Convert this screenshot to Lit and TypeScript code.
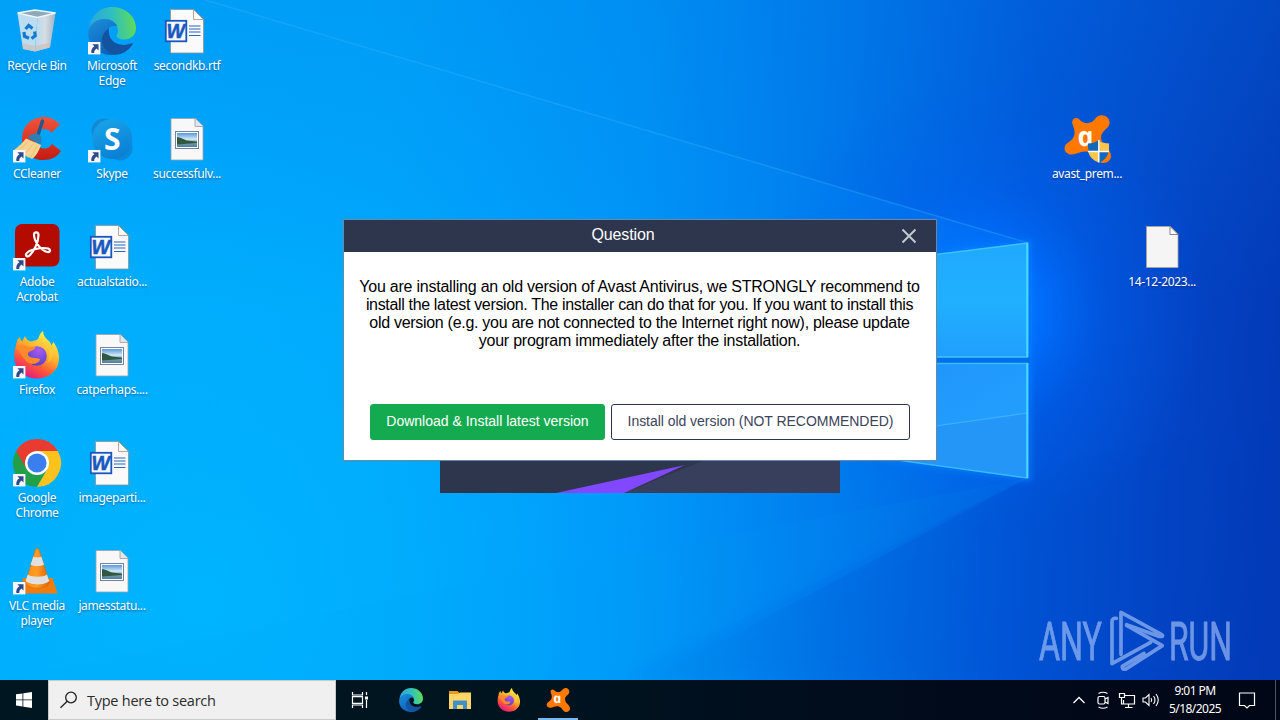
import { LitElement, html, svg, css } from "lit";
import { customElement, property } from "lit/decorators.js";

const shortcut = svg`
  <rect x="0" y="35" width="12.4" height="12.4" fill="#f6f8fb"/>
  <path d="M4.300 37.200h6.200v6.200l-2-2c-1.900 1.500-2.600 3-2.200 4.700H3.400c-.6-2.700.6-5.200 3-6.800z" fill="#2f4a8c"/>`;

const edge = svg`
  <defs>
    <linearGradient id="e1" x1="0" y1=".4" x2="1" y2=".3"><stop offset="0" stop-color="#2aa5dc"/><stop offset=".5" stop-color="#30bfc0"/><stop offset="1" stop-color="#62dd50"/></linearGradient>
    <linearGradient id="e2" x1="0" y1="0" x2=".6" y2="1"><stop offset="0" stop-color="#1c8fdd"/><stop offset="1" stop-color="#0c61b8"/></linearGradient>
  </defs>
  <path d="M1 22C2 9 12 0 24 0c14 0 24 10 24 21 0 7-5 11.500-11.500 11.500-5 0-8-2-8-3.500 0-1 1.500-2 1.500-5C30 18 24 14 17 14 9 14 3 18 1 22z" fill="url(#e1)"/>
  <path d="M.3 25C1 18 8 12 16 12c7 0 12 3.500 13.500 8C26 17 19 20 18 27c-1 8 5 17 14 19.500C28 48 24 48 22 48 9 47-.5 37 .3 25z" fill="url(#e2)"/>
  <path d="M21 21.500c-6 4-9 10-6 17 3 6 9 9.500 15 9 6-1 11.500-5 14.500-10 .5-1-.3-1.600-1.200-1.200C32 41 19 35 21 21.500z" fill="#1453a0"/>`;

const firefox = svg`
  <defs>
    <linearGradient id="f1" x1=".8" y1=".1" x2=".3" y2="1"><stop offset="0" stop-color="#fff14a"/><stop offset=".4" stop-color="#ffae2c"/><stop offset=".68" stop-color="#ff5a37"/><stop offset="1" stop-color="#e31587"/></linearGradient>
    <radialGradient id="f2" cx=".6" cy=".2" r=".8"><stop offset="0" stop-color="#a65bf2"/><stop offset="1" stop-color="#5a42c9"/></radialGradient>
  </defs>
  <path d="M3 15c0-4 1.500-7 4-9 .3 2.500 1 3.700 2 4.500L12 5c1 3 3 5 6 5.500 3-.5 5.500-1 7.500-3 .5-3 1.800-5.500 4.500-7.500.5 5 3 8 6.500 10.500 1 1.500 1.500 2.500 1.800 4L40.500 11c5 7 7 15 4.500 23-3 8-11 13.500-21 13.500C11 47.500 2 38 1.300 27 1.200 22 1.500 18 3 15z" fill="url(#f1)"/>
  <circle cx="24" cy="25" r="9.800" fill="url(#f2)"/>
  <path d="M3 17c4-3 8-3.500 12-1.500 3 1 6-.5 7.500 1-1 2.500-4.500 3.200-6.500 4.500-2 2-.8 4 1 5 4 1.800 8 .3 10 2.200-1 4.800-9 6.300-13.500 2C9 26 7 20 3 17z" fill="#ff8a2c"/>
  <path d="M30 12c7 5 9 13 4 20 5-3 8-9 5-16-2-4-5-6-9-4z" fill="#ffcb38" opacity=".75"/>`;

const avast = svg`
  <path d="M9.500 9c-1.500-5 3.500-8 7-4.500 3.500 4 8.500 4.500 12.500 2.500C32 5 33 1 37.500.300 43-.7 47.500 4 46.500 9c-.7 3.500-4 5-6.500 8-3.500 4.500-1.500 10 1.500 13.500 2.500 3 6.500 5.500 6.500 10.500 0 4-3.500 7-7.500 7-5.500 0-7-5-10-8-4-4-9-4-14-2.500-3.500 1-7 3-11 1.500-5-2-5-8-1.500-10.500C7 26 10.500 24.500 11.500 19c.6-3.500-1-6.500-2-10z" fill="#ff7800"/>
  <text class="a" x="0" y="0" text-anchor="middle" transform="translate(24 30.500) skewX(12)">a</text>`;

const word = svg`
  <path d="M7.500 2.500h23l10 10v33.500h-33z" fill="#fafafa" stroke="#8b9299" stroke-width=".8"/>
  <path d="M30.500 2.500v10h10z" fill="#fff" stroke="#a88d7c" stroke-width=".8"/>
  <path d="M26 19h11.500M26 22h11.500M26 25h11.500M26 28.500h11.500" stroke="#2b64b8" stroke-width="1.100"/>
  <rect x="2.800" y="13.800" width="20.500" height="20.500" fill="#f4f7fc" stroke="#1957bd" stroke-width="1.800"/>
  <text class="w" x="12.800" y="31" text-anchor="middle">W</text>`;

const picture = svg`
  <defs><linearGradient id="p1" x1="0" y1="0" x2="0" y2="1"><stop offset="0" stop-color="#5796dd"/><stop offset=".45" stop-color="#d4eaf6"/><stop offset=".6" stop-color="#7da9bd"/><stop offset="1" stop-color="#507f9c"/></linearGradient></defs>
  <path d="M8 3.500h24.500l7.500 7.500v34H8z" fill="#f8f8f8" stroke="#9aa1a8" stroke-width=".8"/>
  <path d="M32 3.500v8h8" fill="#dfe7ec" stroke="#9b9b9b" stroke-width=".8"/>
  <rect x="12.500" y="16.500" width="23" height="17" fill="#fff" stroke="#71839a"/>
  <rect x="14" y="18" width="20" height="14" fill="url(#p1)"/>
  <path d="M14 22c4 0 8 4 14 4l6 .8v1.200L14 29.500z" fill="#31583f"/>`;

const blank = svg`
  <path d="M8.500 3.500h24l7.500 7.500v33.500H8.500z" fill="#f5f5f5" stroke="#a9a49b" stroke-width=".8"/>
  <path d="M32 3.500v8h8z" fill="#fff" stroke="#777" stroke-width=".9"/>`;

const icons: Record<string, unknown> = {
  edge: svg`${edge}${shortcut}`,
  firefox: svg`${firefox}${shortcut}`,
  word,
  picture,
  blank,
  bin: svg`
    <defs><linearGradient id="b1" x1="0" x2="1"><stop offset="0" stop-color="#b9d9ef"/><stop offset=".5" stop-color="#d4dde4"/><stop offset="1" stop-color="#a2b4c2"/></linearGradient></defs>
    <path d="M4.500 6.500 24.500 9.500 22 44.500 10 42z" fill="#bcdcf0"/>
    <path d="M24.500 9.500 42.500 6 37 40.500 22 44.500z" fill="url(#b1)"/>
    <path d="M9.300 36.500 22.500 39 37.500 35.500 37 40.500 22 44.500 10 42z" fill="#cfbfb4" opacity=".65"/>
    <path d="M4.500 6 22 3l20.500 3-18 4.500z" fill="#8fa9b9" stroke="#eef5f9" stroke-width="1.300"/>
    <g fill="none" stroke="#1479d3" stroke-width="3.200"><path d="m12.500 22 3.200-3.500 3.800 3M11 25l.5 4.300 4.500 2M21.700 24.500l.5 4.200-3.700 2.800"/></g>`,
  ccleaner: svg`
    <defs><linearGradient id="c1" x1="0" y1="0" x2="0" y2="1"><stop offset="0" stop-color="#f1543c"/><stop offset="1" stop-color="#c41a12"/></linearGradient></defs>
    <path d="M47 9.500C42 4 36 1.500 29 2 17 3 9 12 9 24c0 13 10 21 21 21 8 0 14-3 18-9l-9-7c-2 3-4.500 4.500-8 4.500-5.500 0-9.500-4-9.500-9.500S25 14 31 14c3 0 5.500 1 7.500 3.500z" fill="url(#c1)"/>
    <path d="M29.500 6 25 20" stroke="#215a8a" stroke-width="3.400" stroke-linecap="round"/>
    <path d="M15 23c2-4 6-5 11-3.500 3 2 3 6 1.500 10z" fill="#2f7fb5"/>
    <path d="M13 23.500 28 30c-2 6-5 11-9 14-2-1-3-2-4-1.500C10 38 5 36 1 35c4-3 8-6.500 12-11.500z" fill="#f6d391"/>
    <path d="m7 34 8-7M13 38l7-9M18 42l6-11" stroke="#e6b970" stroke-width=".8"/>${shortcut}`,
  skype: svg`
    <defs><linearGradient id="s1" x1=".2" y1="0" x2=".6" y2="1"><stop offset="0" stop-color="#18a4ea"/><stop offset="1" stop-color="#0a7fd4"/></linearGradient></defs>
    <circle cx="16" cy="16" r="12.500" fill="#1589d6"/><circle cx="32" cy="33" r="12.500" fill="#0c88d8"/>
    <circle cx="24.300" cy="24" r="20" fill="url(#s1)"/>
    <text class="s" x="24.300" y="35" text-anchor="middle">S</text>${shortcut}`,
  acrobat: svg`
    <rect x="2" y="1" width="44.500" height="42.500" rx="7" fill="#b30b00"/>
    <path d="M21 11.500c0-3 4.500-3 4.500.500 0 7-4.500 16.500-9 20.500-2 1.800-4.200.5-3.300-1.500 2-4.500 16-7 22-5.500 3 1.200 2 4-.8 3.500C28.500 28 21 19 21 11.500z" fill="none" stroke="#fff" stroke-width="2.200"/>${shortcut}`,
  chrome: svg`
    <path d="M3.200 12A24 24 0 0 0 24 48L34.400 30 24 24z" fill="#21a049"/>
    <path d="M44.800 12A24 24 0 0 1 24 48l10.400-18L24 12z" fill="#fcc31e"/>
    <path d="M24 12h20.800A24 24 0 0 0 3.200 12l10.400 18z" fill="#ea3b30"/>
    <circle cx="24" cy="24" r="12" fill="#fff"/><circle cx="24" cy="24" r="9.600" fill="#3b7fee"/>${shortcut}`,
  vlc: svg`
    <defs><linearGradient id="v1" x1="0" x2="1"><stop offset="0" stop-color="#f98b14"/><stop offset=".45" stop-color="#ff9c25"/><stop offset="1" stop-color="#df6206"/></linearGradient></defs>
    <path d="M10 31h29.500l5 15.500h-36z" fill="#f07c10"/>
    <path d="M12.500 36 22.500 2.500q1.800-2 3.500 0L36.500 36c-2 7-22 7-24 0z" fill="url(#v1)" stroke="#d96808" stroke-width=".6"/>
    <path d="M20.300 9.500c2 1.200 6 1.200 8 0l2.700 8.300c-3 1.700-10.500 1.700-13.400 0zM14.700 27.500c4 3 16 3 19.300 0l2.200 6.500c-4 4.500-19 4.500-23.600 0z" fill="#e0e0e0"/>${shortcut}`,
  avast: svg`${avast}
    <path d="M25 28.500c4 0 8-1 10.500-3.500 2.500 2.500 6.500 3.500 10.500 3.500.5 9-3 16-10.500 19-7.500-3-11-10-10.500-19z" fill="#1268ba"/>
    <path d="M36 25.500c2.500 2.300 6 3 10 3v8H36zM25.300 36.500h10.400v11c-6-2.500-9.500-6-10.400-11z" fill="#fbc54b"/>
    <path d="M36 36.500h9.500c-1 5-4 9-9.500 11z" fill="#1268ba"/>
    <path d="M35.800 25v22.500M25 36.500h21" stroke="#fff" stroke-width="1.400"/>`,
  avastBar: avast,
  edgeBar: edge,
  firefoxBar: firefox,
};

interface Item { icon: string; label: string; col: number; row: number; }

const items: Item[] = [
  { icon: "bin", label: "Recycle Bin", col: 1, row: 1 },
  { icon: "ccleaner", label: "CCleaner", col: 1, row: 2 },
  { icon: "acrobat", label: "Adobe Acrobat", col: 1, row: 3 },
  { icon: "firefox", label: "Firefox", col: 1, row: 4 },
  { icon: "chrome", label: "Google Chrome", col: 1, row: 5 },
  { icon: "vlc", label: "VLC media player", col: 1, row: 6 },
  { icon: "edge", label: "Microsoft Edge", col: 2, row: 1 },
  { icon: "skype", label: "Skype", col: 2, row: 2 },
  { icon: "word", label: "actualstatio...", col: 2, row: 3 },
  { icon: "picture", label: "catperhaps....", col: 2, row: 4 },
  { icon: "word", label: "imageparti...", col: 2, row: 5 },
  { icon: "picture", label: "jamesstatu...", col: 2, row: 6 },
  { icon: "word", label: "secondkb.rtf", col: 3, row: 1 },
  { icon: "picture", label: "successfulv...", col: 3, row: 2 },
  { icon: "avast", label: "avast_prem...", col: 15, row: 2 },
  { icon: "blank", label: "14-12-2023...", col: 16, row: 3 },
];

@customElement("app-icon")
class AppIcon extends LitElement {
  @property() name = "";
  static styles = css`
    :host { display: block; width: 48px; height: 48px; }
    svg { display: block; width: 100%; height: 100%; overflow: visible; }
    .a { font: italic 700 27px "Open Sans", sans-serif; fill: #fff; }
    .w { font: italic 700 19.5px "Liberation Sans", sans-serif; fill: #1957bd; stroke: #1957bd; stroke-width: .5px; }
    .s { font: 700 30px "Open Sans", sans-serif; fill: #fff; }
  `;
  render() {
    return html`<svg viewBox="0 0 48 48">${icons[this.name]}</svg>`;
  }
}

@customElement("desk-wallpaper")
class DeskWallpaper extends LitElement {
  static styles = css`
    :host { display: block; }
    svg { display: block; }
    .mark { font: 400 53px Roboto, sans-serif; }
  `;
  render() {
    return html`<svg width="1280" height="680" viewBox="0 0 1280 680">
      <defs>
        <linearGradient id="base" gradientUnits="userSpaceOnUse" x1="0" y1="240" x2="1280" y2="300">
          <stop offset="0" stop-color="#00acfd"/><stop offset=".3" stop-color="#00a6fb"/>
          <stop offset=".5" stop-color="#0093f6"/><stop offset=".65" stop-color="#0078ea"/>
          <stop offset=".8" stop-color="#0156d8"/><stop offset=".92" stop-color="#0344c5"/><stop offset="1" stop-color="#033ab8"/>
        </linearGradient>
        <linearGradient id="top" gradientUnits="userSpaceOnUse" x1="0" y1="0" x2="0" y2="300">
          <stop offset="0" stop-color="#0078e4" stop-opacity=".22"/><stop offset="1" stop-color="#0078e4" stop-opacity="0"/>
        </linearGradient>
        <radialGradient id="lower" gradientUnits="userSpaceOnUse" cx="200" cy="600" r="620">
          <stop offset="0" stop-color="#00b7ff" stop-opacity=".85"/><stop offset=".55" stop-color="#00b0ff" stop-opacity=".45"/><stop offset="1" stop-color="#00a0ff" stop-opacity="0"/>
        </radialGradient>
        <radialGradient id="glow" gradientUnits="userSpaceOnUse" cx="980" cy="310" r="230">
          <stop offset="0" stop-color="#0a8cff"/><stop offset=".28" stop-color="#0070ff" stop-opacity=".85"/><stop offset=".55" stop-color="#0062f4" stop-opacity=".35"/><stop offset="1" stop-color="#0058e8" stop-opacity="0"/>
        </radialGradient>
        <linearGradient id="beam" gradientUnits="userSpaceOnUse" x1="230" y1="0" x2="1028" y2="0">
          <stop offset="0" stop-color="#0aa8ff" stop-opacity=".1"/><stop offset=".8" stop-color="#0090ff" stop-opacity=".6"/><stop offset="1" stop-color="#0084ff" stop-opacity=".4"/>
        </linearGradient>
        <linearGradient id="pane" gradientUnits="userSpaceOnUse" x1="0" y1="243" x2="0" y2="357">
          <stop offset="0" stop-color="#20a9ff"/><stop offset=".5" stop-color="#20b0ff"/><stop offset="1" stop-color="#219fff"/>
        </linearGradient>
        <linearGradient id="pane2" gradientUnits="userSpaceOnUse" x1="930" y1="363" x2="1000" y2="478">
          <stop offset="0" stop-color="#2196fc"/><stop offset="1" stop-color="#22a2ff"/>
        </linearGradient>
        <filter id="soft" x="-30%" y="-30%" width="160%" height="160%"><feGaussianBlur stdDeviation="3"/></filter>
        <filter id="haze" x="-30%" y="-30%" width="160%" height="160%"><feGaussianBlur stdDeviation="8"/></filter>
      </defs>
      <rect width="1280" height="680" fill="url(#base)"/>
      <rect width="1280" height="680" fill="url(#lower)"/>
      <rect width="1280" height="300" fill="url(#top)"/>
      <rect width="1280" height="680" fill="url(#glow)"/>
      <path d="M200 0 1028 243V478L500 760H-50V0z" fill="url(#beam)" opacity=".4" />
      <path d="M205 0 1028 243" stroke="#38b4ff" stroke-width="1.400" opacity=".35"/>
      <path d="M1028 478 620 680H1180L1290 620V430z" fill="#0342b9" opacity=".08" filter="url(#haze)"/>
      <path d="M1028 478 440 590 0 680H620z" fill="#00a0f0" opacity=".08"/>
      <path d="M880 262 1028 243V478L880 457" fill="none" stroke="#1082ff" stroke-width="7" opacity=".6" filter="url(#soft)"/>
      <path d="M900 357h130v6H900z" fill="#0070ea"/>
      <path d="M900 259 1027.500 243V357H900z" fill="url(#pane)" stroke="#3cc4ff" stroke-width="1.400"/>
      <path d="M900 363.500H1027.500V478L900 460.500z" fill="url(#pane2)" stroke="#36bcff" stroke-width="1.400"/>
      <path d="M900 431 1027 413V477L900 459.500z" fill="#2496f8"/>
      <path d="M900 431 1027 413" stroke="#45b8ff" stroke-width="1.200" opacity=".8"/>
      <path d="M1027.300 243V357M1027.300 363V478" stroke="#45dcff" stroke-width="2"/>
      <g fill="#b9d1ff" stroke="#b9d1ff" stroke-width=".9" opacity=".58">
        <text class="mark" x="1039" y="659.500" textLength="63" lengthAdjust="spacingAndGlyphs">ANY</text>
        <text class="mark" x="1169" y="659.500" textLength="63" lengthAdjust="spacingAndGlyphs">RUN</text>
      </g>
      <g transform="translate(1020 600) scale(.3333)" fill="none" stroke="#b9d1ff" stroke-width="11" opacity=".58" stroke-linejoin="round" stroke-linecap="round">
        <path d="M289 55q-13-2-13 10V191L392 127"/>
        <path d="M303 163V37L424 103q10 8-8 6L320 74"/>
        <path d="M320 76 427 137 318 207q-14 3-11-8L372 160"/>
      </g>
    </svg>`;
  }
}

@customElement("task-bar")
class TaskBar extends LitElement {
  static styles = css`
    :host { display: flex; height: 40px; background: linear-gradient(90deg, #001621, #001420 40%, #010a1b 75%, #010716); color: #fff; font-family: "Noto Sans", sans-serif; }
    svg { display: block; fill: none; stroke: #fff; }
    .start { width: 48px; display: grid; place-items: center; }
    .solid { fill: #fff; stroke: none; }
    .search { box-sizing: border-box; width: 288px; background: #f0f0f0; border: 1px solid #c9cccd; display: flex; align-items: center; padding-left: 10px; gap: 8px; color: #2b2b2b; font: 14.5px "Open Sans", sans-serif; letter-spacing: -.25px; white-space: nowrap; }
    .search svg { stroke: #202020; }
    .apps { display: flex; }
    .app { width: 49px; display: grid; place-items: center; box-sizing: border-box; }
    .app:first-child { margin-right: 1px; padding-right: 1px; }
    .app app-icon { width: 24px; height: 24px; }
    .active { width: 40px; margin: 0 5px; border-bottom: 2px solid #76b9ed; padding-top: 2px; }
    .tray { margin-left: auto; display: flex; align-items: center; }
    .tray svg { width: 24px; height: 24px; }
    .clock { width: 64px; text-align: center; font: 12px/18px "Noto Sans", sans-serif; letter-spacing: -.55px; white-space: nowrap; }
    .note { width: 40px; display: grid; place-items: center; }
    .peek { width: 4px; height: 40px; border-left: 1px solid #4a5361; margin-left: 8px; }
  `;
  render() {
    return html`
      <div class="start"><svg class="solid" width="16" height="16" viewBox="0 0 16 16"><path d="M0 2.300 6.500 1.400V7.500H0zM7.300 1.300 16 0V7.500H7.300zM0 8.300H6.500V14.500L0 13.600zM7.300 8.300H16V16L7.300 14.700z"/></svg></div>
      <div class="search"><svg width="20" height="20" viewBox="0 0 20 20" stroke-width="1.300"><circle cx="12" cy="7.500" r="5.300"/><path d="m8.200 11.300-6.700 6.500"/></svg><span>Type here to search</span></div>
      <div class="apps">
        <div class="app"><svg width="18" height="18" viewBox="0 0 18 18" stroke-width="1.200"><path d="M1.500 1v3h10V1M1.500 17v-3h10v3M1.500 5.600h10v6.800h-10zM15.500 1v3M15.500 9v8"/><path d="M14 5.500h3v3h-3z" fill="#fff" stroke="none"/></svg></div>
        <div class="app"><app-icon name="edgeBar"></app-icon></div>
        <div class="app"><svg width="22" height="20" viewBox="0 0 22 20" stroke="none"><path d="M0 1h8.500l2 2H21v3H0z" fill="#e89a1c" stroke="none"/><path d="M0 4h9l2-1.500h11V19H0z" fill="#ffd566" stroke="none"/><path d="M4 19v-7.500q0-1 1-1h12q1 0 1 1V19h-4v-4H8v4z" fill="#3e8fcb" stroke="none"/></svg></div>
        <div class="app"><app-icon name="firefoxBar"></app-icon></div>
        <div class="app active"><app-icon name="avastBar"></app-icon></div>
      </div>
      <div class="tray">
        <svg viewBox="0 0 24 24" stroke-width="1.300"><path d="m6.500 15 5.500-5.500L17.500 15"/></svg>
        <svg viewBox="0 0 24 24" stroke-width="1.200"><rect x="7" y="8.500" width="7" height="7.500" rx="1.500"/><path d="m14 11 3-1.500v6L14 14M7.500 5.500q4.500-2.500 9 0M7.500 19q4.500 2.500 9 0"/></svg>
        <svg viewBox="0 0 24 24" stroke-width="1.200"><path d="M9.500 7.500H19.500V16H8.500V12M13.500 16v3M10 19.500h7.500M4.500 5.500h5v4h-5zM6.500 9.500v6.500h2"/></svg>
        <svg viewBox="0 0 24 24" stroke-width="1.100"><path d="M4 10h2.500L10 6.500v11L6.500 14H4zM12 10q1.500 2 0 4M14.500 8q3 4 0 8M17 6q4.500 6 0 12"/></svg>
        <div class="clock"><div>9:01 PM</div><div>5/18/2025</div></div>
        <div class="note"><svg viewBox="0 0 24 24" stroke-width="1.200"><path d="M4.500 5h15v12.500h-5L12 20l-2.500-2.500h-5z"/></svg></div>
        <div class="peek"></div>
      </div>`;
  }
}

@customElement("question-dialog")
class QuestionDialog extends LitElement {
  static styles = css`
    :host { display: flex; flex-direction: column; box-sizing: border-box; width: 594px; height: 242px; border: 1px solid #6789a6; background: #fff; font-family: "Liberation Sans", Arial, sans-serif; color: #000; }
    .head { height: 32px; flex: none; background: #2d364c; color: #fff; display: grid; grid-template-columns: 36px 1fr 36px; align-items: center; padding: 0 9px 0 11px; }
    .title { grid-column: 2; text-align: center; font-size: 16px; line-height: 18px; letter-spacing: -.15px; padding-bottom: 2px; margin-right: 36px; }
    .head svg { justify-self: center; display: block; }
    .text { margin: 26px 0 0; text-align: center; font-size: 16px; line-height: 18px; white-space: nowrap; padding-right: 1px; letter-spacing: -.23px; }
    .tight { letter-spacing: -.34px; }
    .snug { letter-spacing: -.29px; }
    .row { margin-top: auto; display: flex; gap: 6px; padding: 0 0 20px 26px; }
    .btn { box-sizing: border-box; height: 36px; border-radius: 3px; font: 14px/16px "Liberation Sans", Arial, sans-serif; text-align: center; border: 1px solid #2d364c; padding: 0 0 2px; background: #fff; color: #3b4458; width: 299px; white-space: nowrap; letter-spacing: -.04px; }
    .primary { width: 235px; background: #14ab50; border-color: #14ab50; color: #fff; letter-spacing: 0; }
  `;
  render() {
    return html`
      <div class="head"><div class="title">Question</div>
        <svg width="16" height="16" viewBox="0 0 16 16" stroke="#c3c7ce" stroke-width="2"><path d="m1.500 1.500 13 13m0-13-13 13"/></svg></div>
      <div class="text">
        <div>You are installing an old version of Avast Antivirus, we STRONGLY recommend to</div>
        <div class="tight">install the latest version. The installer can do that for you. If you want to install this</div>
        <div class="snug">old version (e.g. you are not connected to the Internet right now), please update</div>
        <div>your program immediately after the installation.</div>
      </div>
      <div class="row"><button class="btn primary">Download &amp; Install latest version</button><button class="btn">Install old version (NOT RECOMMENDED)</button></div>`;
  }
}

@customElement("app-root")
class AppRoot extends LitElement {
  static styles = css`
    :host { display: flex; flex-direction: column; position: relative; width: 1280px; height: 720px; overflow: hidden; }
    desk-wallpaper { position: absolute; left: 0; top: 0; }
    .desk { position: relative; flex: 1; display: grid; grid-template-columns: repeat(17, 75px); grid-template-rows: repeat(6, 108px); }
    .item { width: 74px; padding-top: 7px; display: flex; flex-direction: column; align-items: center; gap: 3px; }
    .label { font: 12px/15px "Noto Sans", sans-serif; letter-spacing: -.35px; color: #fff; text-align: center; text-shadow: 0 1px 2px rgba(0, 20, 60, .5); }
    .splash { position: absolute; left: 440px; top: 440px; }
    .splash svg { display: block; }
    question-dialog { position: absolute; left: 343px; top: 219px; }
    task-bar { position: relative; }
  `;
  render() {
    return html`
      <desk-wallpaper></desk-wallpaper>
      <div class="desk">${items.map(i => html`
        <div class="item" style="grid-column:${i.col};grid-row:${i.row}"><app-icon name=${i.icon}></app-icon><div class="label">${i.label}</div></div>`)}
      </div>
      <div class="splash"><svg width="400" height="53" viewBox="0 0 400 53"><path fill="#2d364c" d="M0 0h400v53H0z"/><path fill="#383f5c" d="M184 53 265 20V0h135v53z"/><path fill="#8148ff" d="M116 53 245 25 184 53z"/><path fill="#4b388c" d="M236 27 268 20 242 26z"/></svg></div>
      <question-dialog></question-dialog>
      <task-bar></task-bar>`;
  }
}
